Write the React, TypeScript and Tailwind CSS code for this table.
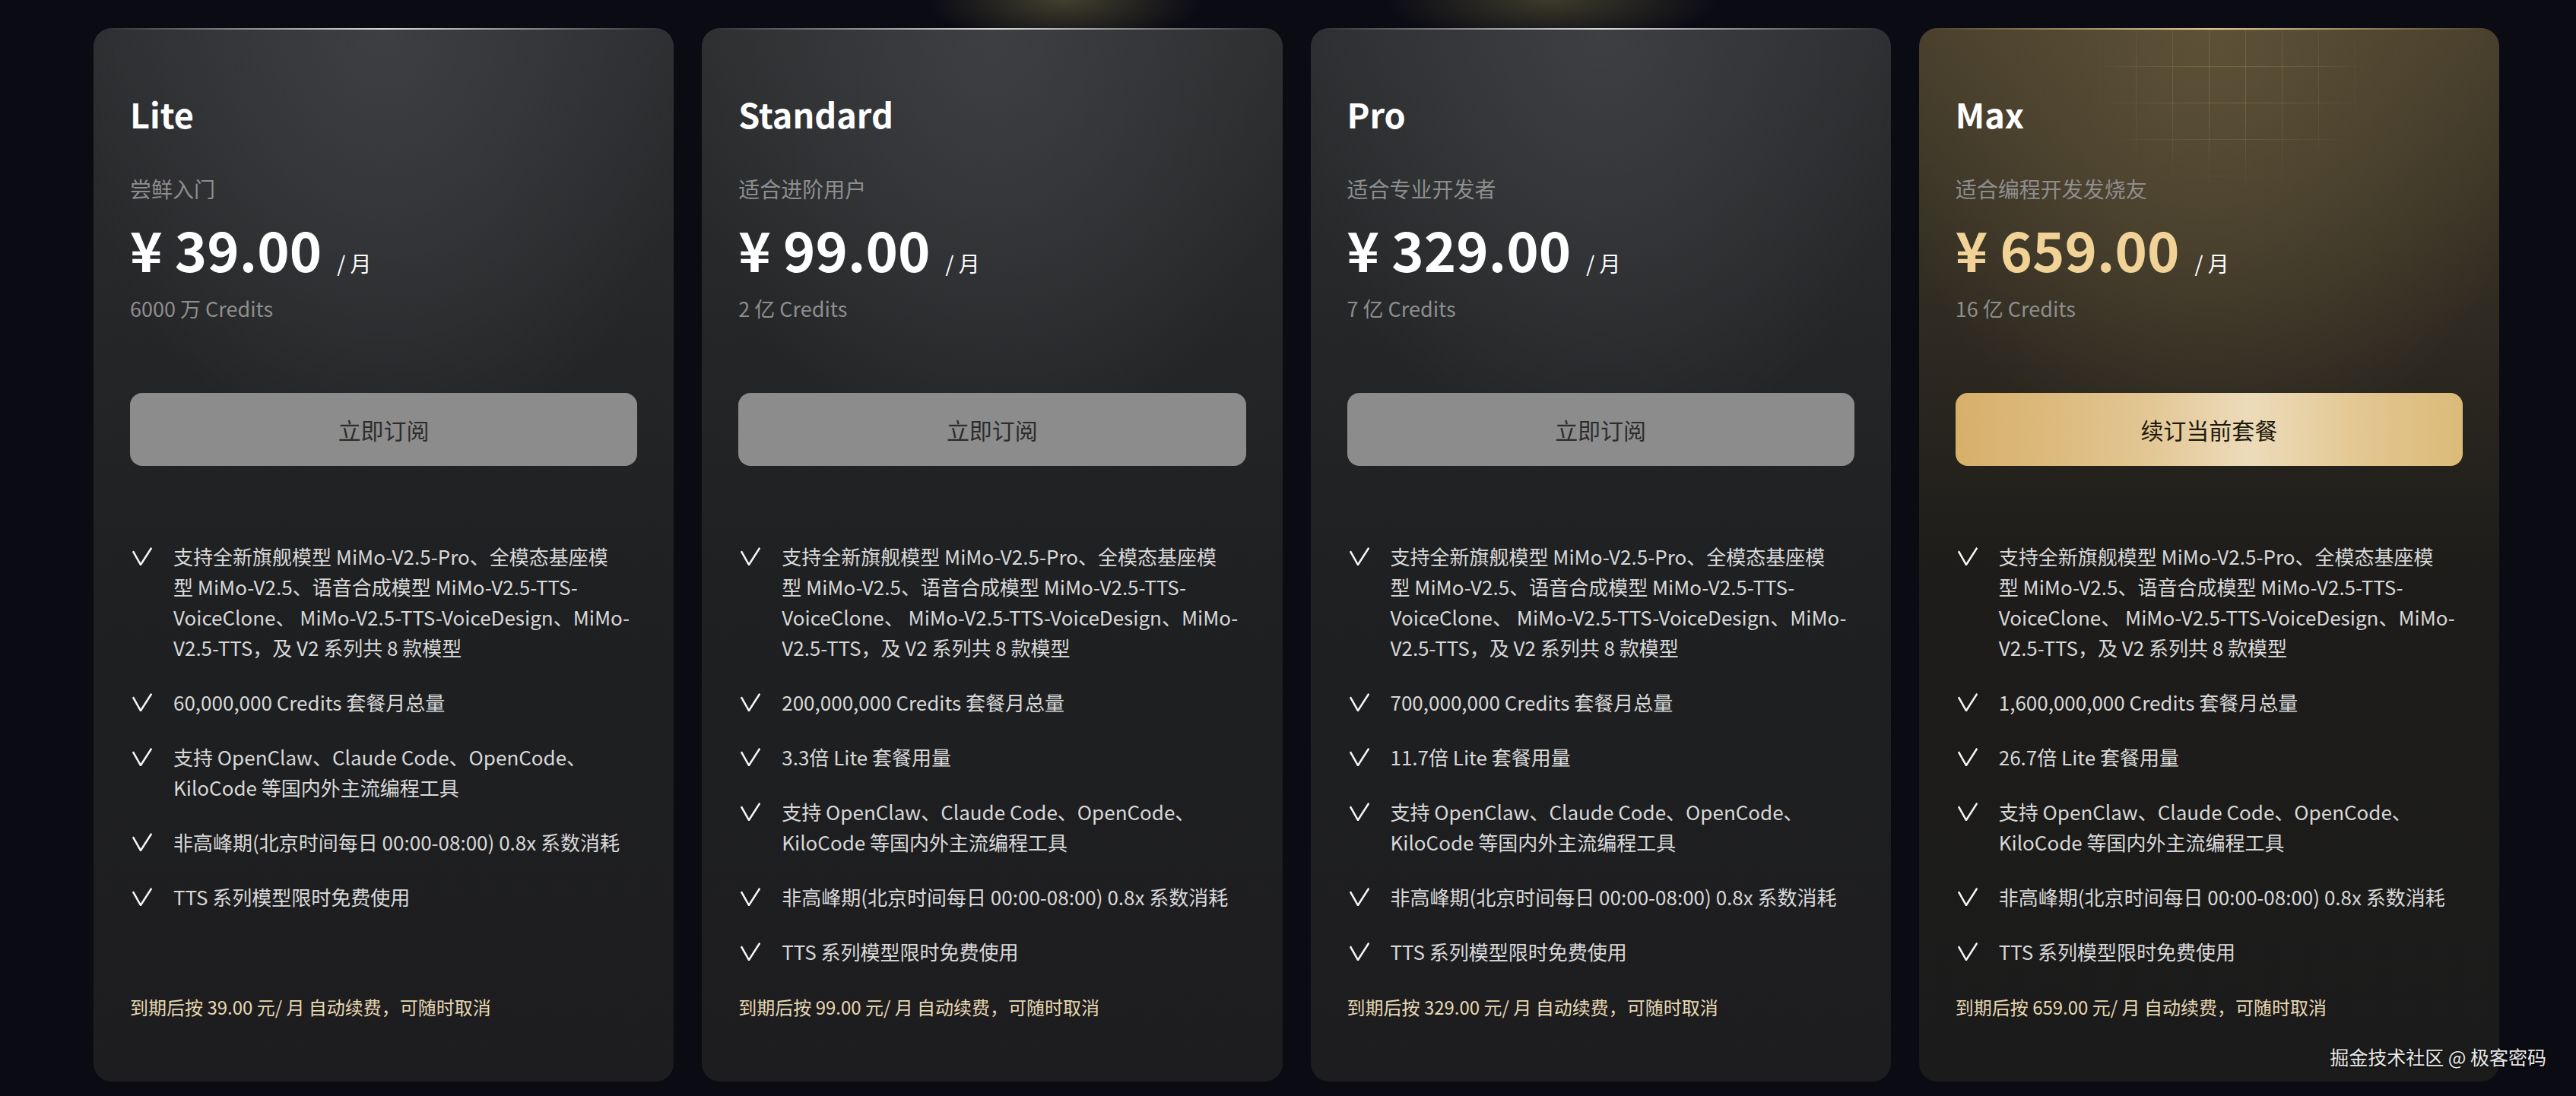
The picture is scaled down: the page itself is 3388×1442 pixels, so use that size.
import { Fragment } from "react";

type Plan = {
  name: string;
  tagline: string;
  price: string;
  credits: string;
  cta: string;
  features: string[][];
  footer: string;
  featured?: boolean;
};

const modelLines = [
  "支持全新旗舰模型 MiMo-V2.5-Pro、全模态基座模",
  "型 MiMo-V2.5、语音合成模型 MiMo-V2.5-TTS-",
  "VoiceClone、 MiMo-V2.5-TTS-VoiceDesign、MiMo-",
  "V2.5-TTS，及 V2 系列共 8 款模型",
];
const toolLines = ["支持 OpenClaw、Claude Code、OpenCode、", "KiloCode 等国内外主流编程工具"];
const offPeak = ["非高峰期(北京时间每日 00:00-08:00) 0.8x 系数消耗"];
const tts = ["TTS 系列模型限时免费使用"];

const plans: Plan[] = [
  {
    name: "Lite",
    tagline: "尝鲜入门",
    price: "39.00",
    credits: "6000 万 Credits",
    cta: "立即订阅",
    features: [modelLines, ["60,000,000 Credits 套餐月总量"], toolLines, offPeak, tts],
    footer: "到期后按 39.00 元/ 月 自动续费，可随时取消",
  },
  {
    name: "Standard",
    tagline: "适合进阶用户",
    price: "99.00",
    credits: "2 亿 Credits",
    cta: "立即订阅",
    features: [modelLines, ["200,000,000 Credits 套餐月总量"], ["3.3倍 Lite 套餐用量"], toolLines, offPeak, tts],
    footer: "到期后按 99.00 元/ 月 自动续费，可随时取消",
  },
  {
    name: "Pro",
    tagline: "适合专业开发者",
    price: "329.00",
    credits: "7 亿 Credits",
    cta: "立即订阅",
    features: [modelLines, ["700,000,000 Credits 套餐月总量"], ["11.7倍 Lite 套餐用量"], toolLines, offPeak, tts],
    footer: "到期后按 329.00 元/ 月 自动续费，可随时取消",
  },
  {
    name: "Max",
    tagline: "适合编程开发发烧友",
    price: "659.00",
    credits: "16 亿 Credits",
    cta: "续订当前套餐",
    features: [modelLines, ["1,600,000,000 Credits 套餐月总量"], ["26.7倍 Lite 套餐用量"], toolLines, offPeak, tts],
    footer: "到期后按 659.00 元/ 月 自动续费，可随时取消",
    featured: true,
  },
];

function Check() {
  return (
    <svg width="26" height="24" viewBox="0 0 26 24" fill="none" className="ml-[3px]">
      <path d="M0.9 5.2 L11 23 L25.3 0.8" stroke="#f6f6f6" strokeWidth="2.5" strokeLinejoin="miter" />
    </svg>
  );
}

function PlanCard({ plan }: { plan: Plan }) {
  return (
    <div
      className={
        plan.featured
          ? "relative flex h-full flex-col rounded-[24px] px-[48px] pt-[85px] pb-[82px] bg-[radial-gradient(ellipse_60%_42%_at_50%_0%,#5d5137_0%,rgba(93,81,55,0)_100%),linear-gradient(180deg,#463d2b_0%,#2c2820_32%,#1d1c1a_52%,#1b1b1b_100%)]"
          : "relative flex h-full flex-col rounded-[24px] px-[48px] pt-[85px] pb-[82px] bg-[radial-gradient(ellipse_55%_42%_at_50%_0%,#3d3f42_0%,rgba(61,63,66,0)_100%),linear-gradient(180deg,#2c2e30_0%,#242527_32%,#1f2022_52%,#1d1d1f_100%)]"
      }
    >
      {/* top edge highlight */}
      <div
        className={
          plan.featured
            ? "absolute top-0 left-[14px] right-[14px] h-[2px] bg-gradient-to-r from-transparent via-[#e2c58f] to-transparent"
            : "absolute top-0 left-[14px] right-[14px] h-[2px] bg-gradient-to-r from-transparent via-[#d8d8d8] to-transparent"
        }
      />
      {plan.featured && (
        <div className="pointer-events-none absolute inset-x-0 top-0 h-[260px] bg-[linear-gradient(to_right,rgba(214,184,120,0.22)_1px,transparent_1px),linear-gradient(to_bottom,rgba(214,184,120,0.22)_1px,transparent_1px)] bg-[size:48px_48px] bg-[position:45px_2px] [mask-image:radial-gradient(ellipse_190px_150px_at_410px_70px,#000_25%,transparent_100%)]" />
      )}

      <h2 className="relative text-[45px] leading-[56px] font-semibold text-white">{plan.name}</h2>
      <p className="relative mt-[50px] text-[28px] leading-[40px] text-[#8e8e8e]">{plan.tagline}</p>
      <div className="relative mt-[14px] flex items-baseline">
        <span
          className={
            plan.featured
              ? "text-[72px] leading-[90px] font-semibold text-[#f1d398]"
              : "text-[72px] leading-[90px] font-semibold text-white"
          }
        >
          ¥ {plan.price}
        </span>
        <span className="ml-[20px] text-[28px] leading-[40px] text-white">/ 月</span>
      </div>
      <p className="mt-[14px] text-[27px] leading-[40px] text-[#8e8e8e]">{plan.credits}</p>

      <button
        className={
          plan.featured
            ? "mt-[91px] h-[96px] w-full rounded-[16px] text-[30px] text-[#211a0c] bg-[linear-gradient(90deg,#d7af69_0%,#e1c48f_35%,#ecdbba_58%,#e2c58e_82%,#dcbb79_100%)]"
            : "mt-[91px] h-[96px] w-full rounded-[16px] bg-[#8c8c8c] text-[30px] text-[#2c2c2c]"
        }
      >
        {plan.cta}
      </button>

      <ul className="mt-[99px] flex flex-col gap-[32px]">
        {plan.features.map((lines, i) => (
          <li key={i} className="flex">
            <div className="flex h-[40px] w-[57px] shrink-0 items-center">
              <Check />
            </div>
            <p className="text-[26px] leading-[40px] whitespace-nowrap text-[#d8d8d8]">
              {lines.map((l, j) => (
                <Fragment key={j}>
                  {j > 0 && <br />}
                  {l}
                </Fragment>
              ))}
            </p>
          </li>
        ))}
      </ul>

      <p className="mt-auto text-[24px] leading-[32px] text-[#e7d8b2]">{plan.footer}</p>
    </div>
  );
}

export default function App() {
  return (
    <div className="relative h-screen w-full overflow-hidden bg-[#0b0b14] bg-[radial-gradient(ellipse_180px_60px_at_1400px_0px,rgba(110,106,66,0.55),transparent),radial-gradient(ellipse_220px_60px_at_2040px_0px,rgba(110,106,66,0.5),transparent)] font-['Noto_Sans_CJK_SC','Noto_Sans',sans-serif] pt-[37px] pl-[123px] pr-[101px]">
      <div className="grid h-[1386px] grid-cols-4 gap-[37px]">
        {plans.map((p) => (
          <PlanCard key={p.name} plan={p} />
        ))}
      </div>
      <div className="absolute right-[39px] top-[1372px] text-[25px] leading-[36px] text-[#e8e8e8] [text-shadow:0_1px_3px_rgba(0,0,0,0.6)]">
        掘金技术社区 @ 极客密码
      </div>
    </div>
  );
}
